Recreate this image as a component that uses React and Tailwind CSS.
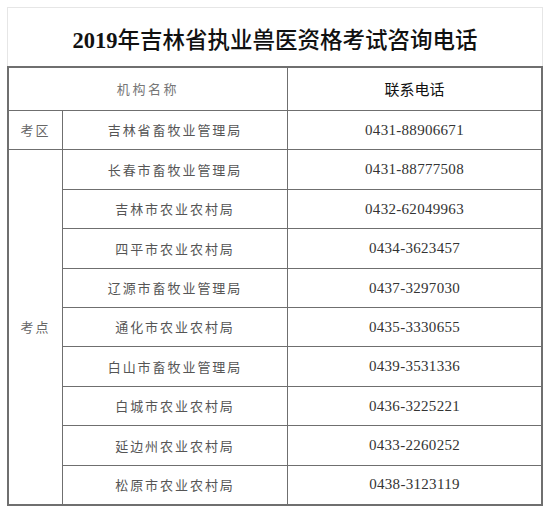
import React from "react";

const rows = [
  ["长春市畜牧业管理局", "0431-88777508"],
  ["吉林市农业农村局", "0432-62049963"],
  ["四平市农业农村局", "0434-3623457"],
  ["辽源市畜牧业管理局", "0437-3297030"],
  ["通化市农业农村局", "0435-3330655"],
  ["白山市畜牧业管理局", "0439-3531336"],
  ["白城市农业农村局", "0436-3225221"],
  ["延边州农业农村局", "0433-2260252"],
  ["松原市农业农村局", "0438-3123119"],
];

function NameCell({ children }) {
  return (
    <div className="bg-white flex items-center justify-center text-[13px] tracking-[0.15em] text-[#555] font-['Noto_Sans_CJK_SC',sans-serif]">
      {children}
    </div>
  );
}

function TelCell({ children }) {
  return (
    <div className="bg-white flex items-center justify-center text-[15px] tracking-[0.02em] text-[#333] font-['Liberation_Serif','Noto_Sans_CJK_SC',serif]">
      {children}
    </div>
  );
}

export default function App() {
  return (
    <div className="w-[552px] h-[513px] bg-white overflow-hidden">
      <div className="pt-[7px] pl-[7px]">
        <div className="w-[536px] h-[59px] border border-b-0 border-[#e6e6e6] flex items-center justify-center pt-[5px]">
          <div className="text-[22.5px] leading-none text-[#111] font-medium font-['Noto_Sans_CJK_SC',sans-serif]">
            <span className="font-bold font-['Liberation_Serif',serif]">2019</span>年吉林省执业兽医资格考试咨询电话
          </div>
        </div>
        <div className="w-[536px] border-2 border-[#6f6f6f] bg-[#6f6f6f] grid grid-cols-[53px_224px_253px] grid-rows-[42px_repeat(10,38.4px)] gap-px">
          <div className="col-span-2 bg-white flex items-center justify-center text-[13px] tracking-[0.2em] text-[#777] font-['Noto_Sans_CJK_SC',sans-serif]">
            机构名称
          </div>
          <div className="bg-white flex items-center justify-center text-[15px] text-[#111] font-['Noto_Sans_CJK_SC',sans-serif]">
            联系电话
          </div>
          <div className="bg-white flex items-center justify-center text-[13px] tracking-[0.15em] text-[#666] font-['Noto_Sans_CJK_SC',sans-serif]">
            考区
          </div>
          <NameCell>吉林省畜牧业管理局</NameCell>
          <TelCell>0431-88906671</TelCell>
          <div className="row-span-9 bg-white flex items-center justify-center text-[13px] tracking-[0.15em] text-[#666] font-['Noto_Sans_CJK_SC',sans-serif]">
            考点
          </div>
          {rows.map(([name, tel]) => (
            <React.Fragment key={name}>
              <NameCell>{name}</NameCell>
              <TelCell>{tel}</TelCell>
            </React.Fragment>
          ))}
        </div>
      </div>
    </div>
  );
}
